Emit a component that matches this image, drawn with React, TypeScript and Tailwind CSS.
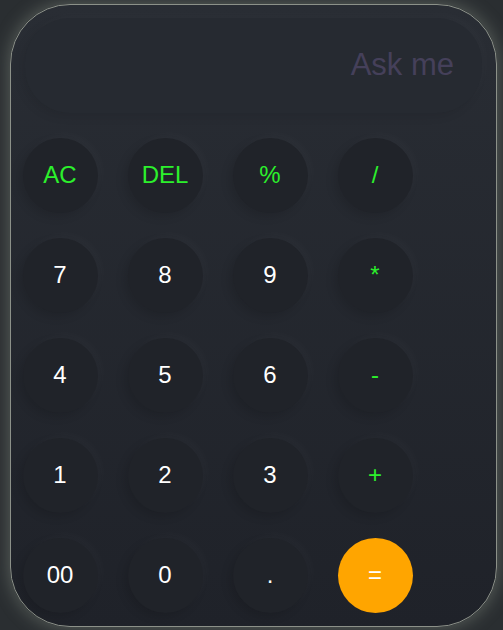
import React from "react";

type Key = {
  label: string;
  tone: "op" | "num" | "eq";
};

const keys: Key[] = [
  { label: "AC", tone: "op" },
  { label: "DEL", tone: "op" },
  { label: "%", tone: "op" },
  { label: "/", tone: "op" },
  { label: "7", tone: "num" },
  { label: "8", tone: "num" },
  { label: "9", tone: "num" },
  { label: "*", tone: "op" },
  { label: "4", tone: "num" },
  { label: "5", tone: "num" },
  { label: "6", tone: "num" },
  { label: "-", tone: "op" },
  { label: "1", tone: "num" },
  { label: "2", tone: "num" },
  { label: "3", tone: "num" },
  { label: "+", tone: "op" },
  { label: "00", tone: "num" },
  { label: "0", tone: "num" },
  { label: ".", tone: "num" },
  { label: "=", tone: "eq" },
];

const CalcKey: React.FC<{ item: Key }> = ({ item }) => {
  if (item.tone === "eq") {
    return (
      <button className="flex h-[75px] w-[75px] items-center justify-center rounded-full bg-[#ffa500] text-[24px] text-white">
        {item.label}
      </button>
    );
  }
  return (
    <button
      className={
        item.tone === "op"
          ? "flex h-[75px] w-[75px] items-center justify-center rounded-full bg-[#202329] text-[24px] text-[#2cf02c] shadow-[-4px_4px_10px_rgba(0,0,0,0.12),4px_-4px_10px_rgba(255,255,255,0.025)]"
          : "flex h-[75px] w-[75px] items-center justify-center rounded-full bg-[#202329] text-[24px] text-white shadow-[-4px_4px_10px_rgba(0,0,0,0.12),4px_-4px_10px_rgba(255,255,255,0.025)]"
      }
    >
      {item.label}
    </button>
  );
};

export default function App() {
  return (
    <div className="h-[630px] w-[503px] overflow-hidden bg-[#2a2e31] pl-[10px] pt-[4px] font-['Liberation_Sans',Arial,sans-serif]">
      <div className="h-[623px] w-[487px] rounded-[60px] border border-[#8c9189] bg-gradient-to-b from-[#292d34] to-[#1f2229] shadow-[0_0_18px_rgba(190,200,180,0.35)]">
        <div className="px-[14px] pt-[13px]">
          <div className="flex h-[95px] items-center justify-end rounded-[45px] bg-[#262a31] pr-[28px] shadow-[-4px_4px_10px_rgba(0,0,0,0.08),4px_-4px_10px_rgba(255,255,255,0.02)]">
            <input
              className="w-full bg-transparent text-right text-[31px] text-[#45405a] placeholder:text-[#45405a] outline-none"
              placeholder="Ask me"
            />
          </div>
        </div>
        <div className="grid w-fit grid-cols-4 gap-x-[30px] gap-y-[25px] pl-[11.5px] pt-[24.5px]">
          {keys.map((k) => (
            <CalcKey key={k.label} item={k} />
          ))}
        </div>
      </div>
    </div>
  );
}
